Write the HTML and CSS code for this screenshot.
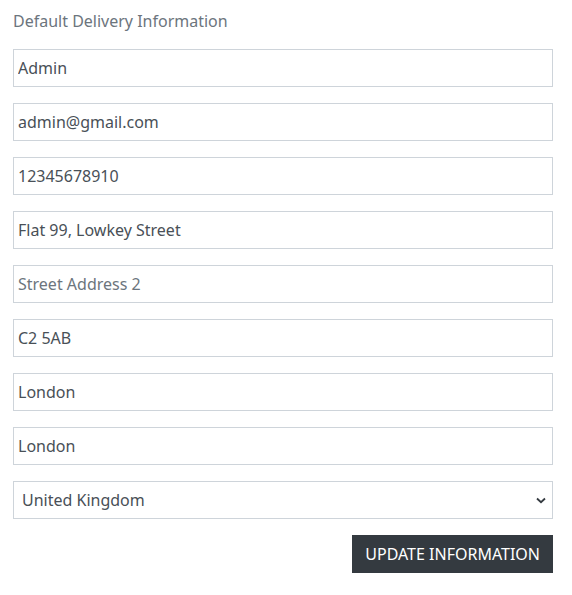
FILE: index.html
```html
<!DOCTYPE html>
<html>
<head>
<meta charset="utf-8">
<link rel="stylesheet" href="styles.css">
</head>
<body>
<form class="form">
  <div class="title">Default Delivery Information</div>
  <input class="field" type="text" value="Admin">
  <input class="field" type="text" value="admin@gmail.com">
  <input class="field" type="text" value="12345678910">
  <input class="field" type="text" value="Flat 99, Lowkey Street">
  <input class="field" type="text" placeholder="Street Address 2">
  <input class="field" type="text" value="C2 5AB">
  <input class="field" type="text" value="London">
  <input class="field" type="text" value="London">
  <div class="select-wrap">
    <select class="field select">
      <option>United Kingdom</option>
    </select>
    <svg class="chevron" width="10" height="7" viewBox="0 0 10 7"><path d="M1 1.5 L5 5.2 L9 1.5" fill="none" stroke="#343a40" stroke-width="1.8"/></svg>
  </div>
  <div class="actions">
    <button type="button" class="btn">UPDATE INFORMATION</button>
  </div>
</form>
</body>
</html>
```
FILE: styles.css
```css
html, body {
  margin: 0;
  padding: 0;
  background: #fff;
}
body {
  font-family: "Noto Sans", "Open Sans", sans-serif;
  color: #495057;
}
.form {
  display: flex;
  flex-direction: column;
  gap: 16px;
  padding: 9px 19px 0 13px;
}
.title {
  font-size: 16px;
  line-height: 24px;
  color: #6c757d;
}
.field {
  box-sizing: border-box;
  width: 100%;
  height: 38px;
  margin: 0;
  padding: 0 4px;
  border: 1px solid #ced4da;
  border-radius: 0;
  font-family: "Noto Sans", "Open Sans", sans-serif;
  font-size: 16px;
  color: #495057;
  background: #fff;
  outline: none;
}
.field::placeholder {
  color: #6c757d;
}
.select-wrap {
  position: relative;
}
.select {
  appearance: none;
  -webkit-appearance: none;
  padding: 0 8px;
}
.chevron {
  position: absolute;
  right: 7px;
  top: 16px;
  pointer-events: none;
}
.actions {
  display: flex;
  justify-content: flex-end;
}
.btn {
  box-sizing: border-box;
  height: 38px;
  padding: 0 13px;
  border: none;
  border-radius: 0;
  background: #343a40;
  color: #fff;
  font-family: "Noto Sans", "Open Sans", sans-serif;
  font-size: 16px;
}
```
